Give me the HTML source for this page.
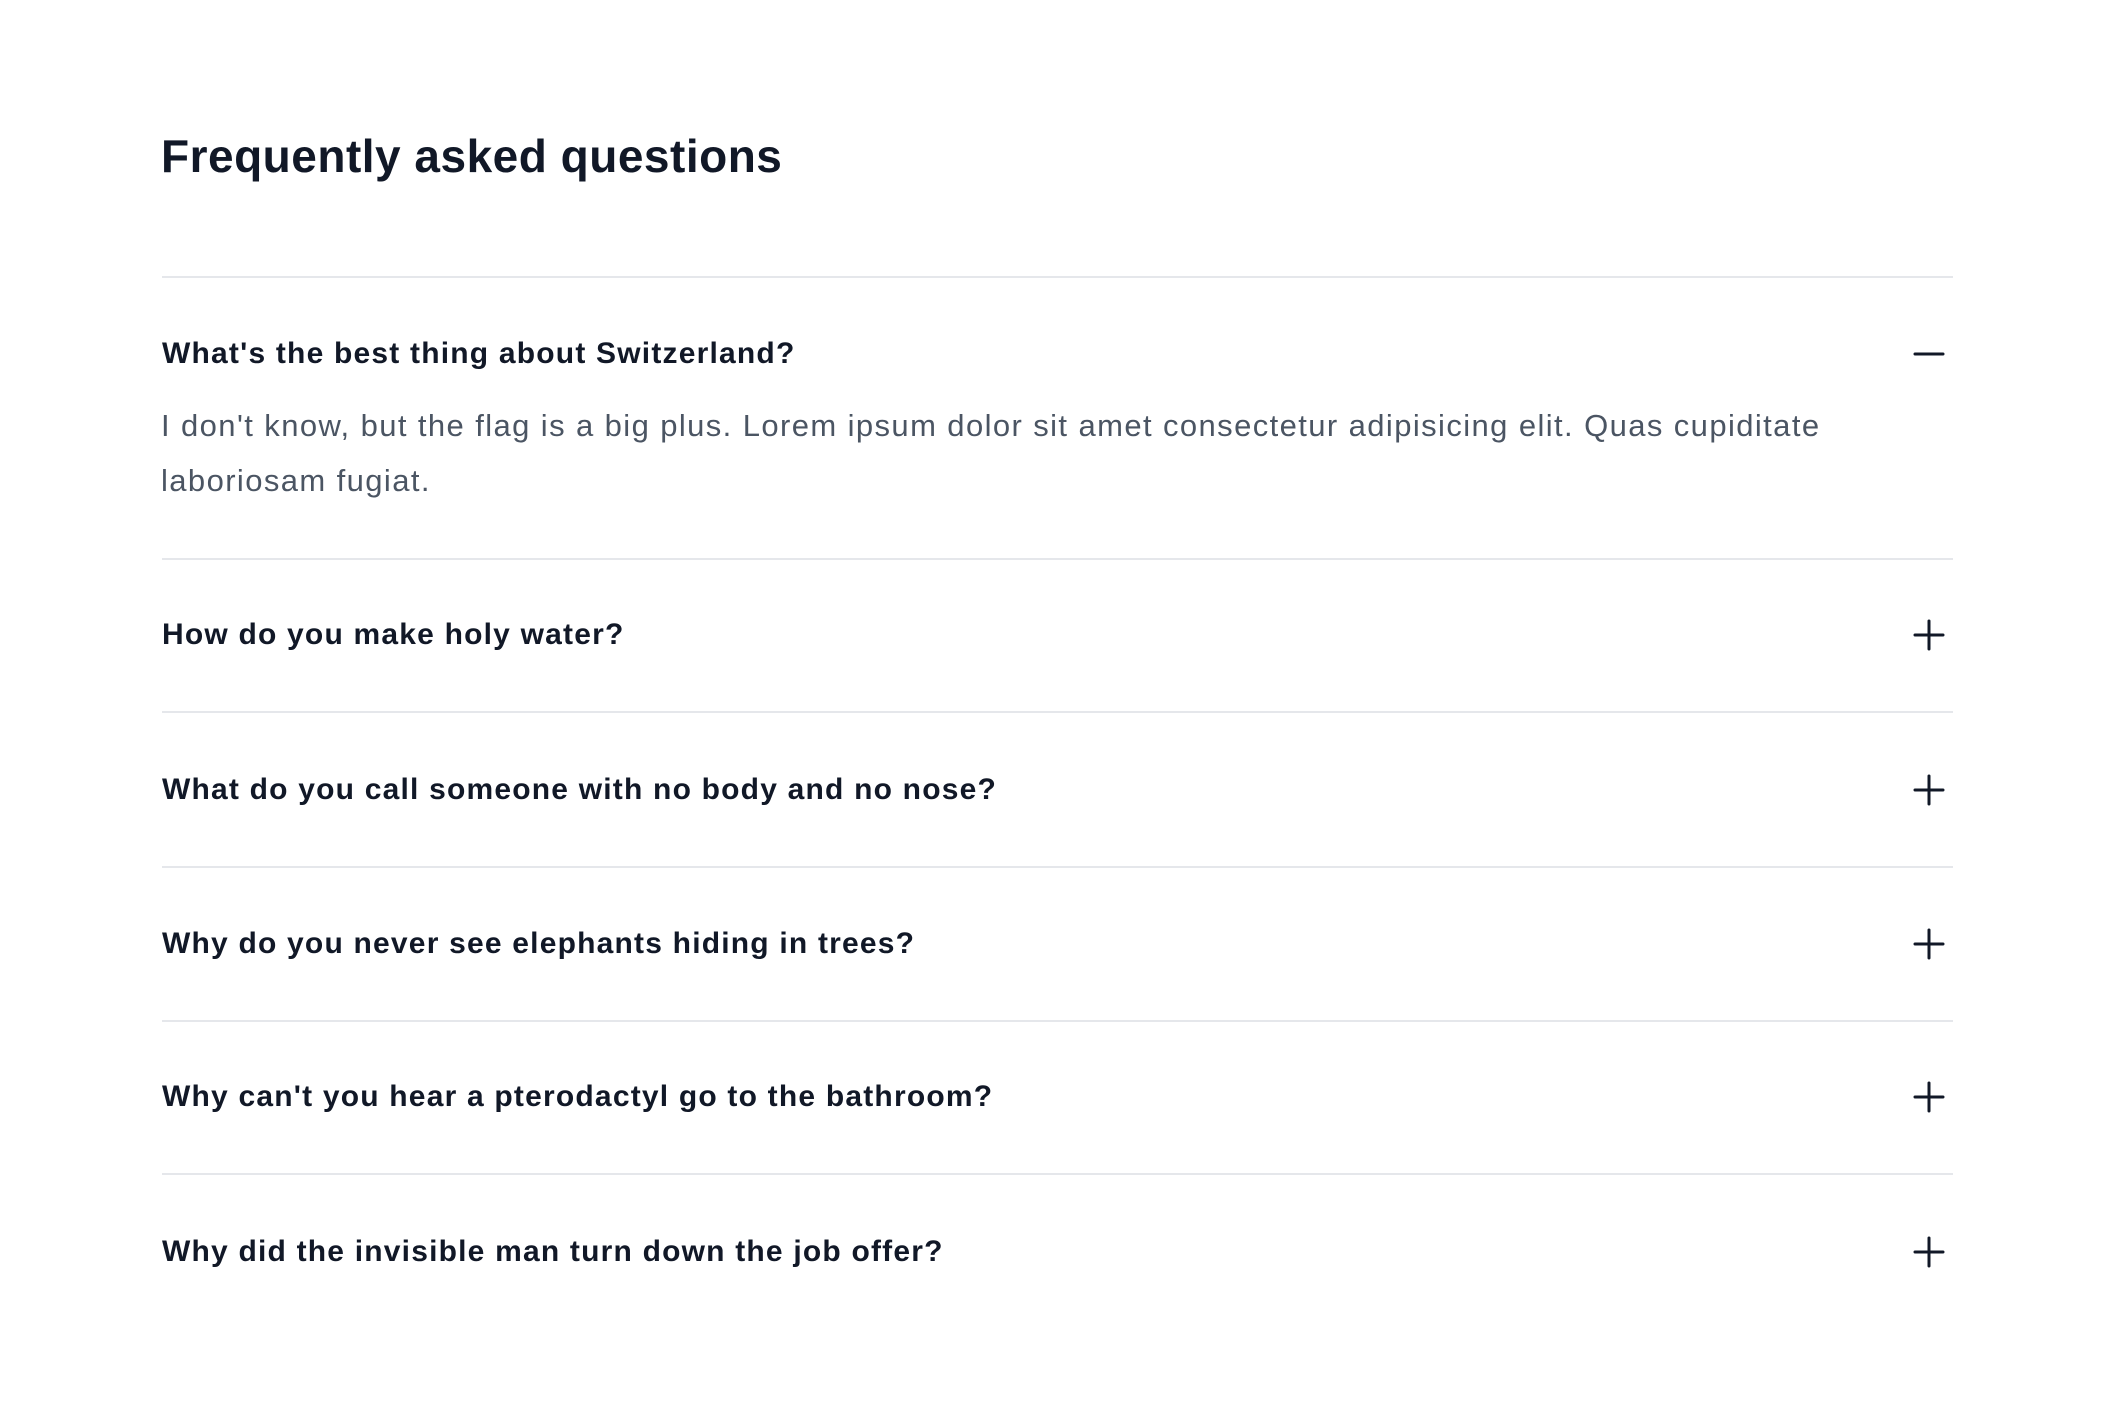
<!DOCTYPE html>
<html><head><meta charset="utf-8"><style>
html,body{margin:0;padding:0;background:#fff;}
body{width:2112px;height:1408px;position:relative;overflow:hidden;font-family:"Liberation Sans",sans-serif;color:#111827;}
h1{position:absolute;left:161px;top:126px;margin:0;font-size:46px;line-height:60px;font-weight:700;letter-spacing:0.5px;}
.hr{position:absolute;left:162px;width:1791px;height:2px;background:#e5e7eb;}
.q{position:absolute;left:162px;font-size:30px;font-weight:700;line-height:40px;letter-spacing:1.2px;}
.a{position:absolute;left:161px;top:398px;width:1740px;font-size:31px;line-height:55px;color:#4b5563;letter-spacing:1.4px;}
svg{position:absolute;left:1913px;width:32px;height:32px;}
</style></head><body>
<h1>Frequently asked questions</h1>
<div class="hr" style="top:276px"></div>
<div class="q" style="top:334px">What's the best thing about Switzerland?</div>
<svg style="top:338px" viewBox="0 0 32 32"><path d="M2 16H30" stroke="#111827" stroke-width="3" stroke-linecap="round"/></svg>
<div class="a">I don't know, but the flag is a big plus. Lorem ipsum dolor sit amet consectetur adipisicing elit. Quas cupiditate laboriosam fugiat.</div>
<div class="hr" style="top:558px"></div>
<div class="q" style="top:615px">How do you make holy water?</div>
<svg style="top:619px" viewBox="0 0 32 32"><path d="M2 16H30M16 2V30" stroke="#111827" stroke-width="3" stroke-linecap="round"/></svg>
<div class="hr" style="top:711px"></div>
<div class="q" style="top:770px">What do you call someone with no body and no nose?</div>
<svg style="top:774px" viewBox="0 0 32 32"><path d="M2 16H30M16 2V30" stroke="#111827" stroke-width="3" stroke-linecap="round"/></svg>
<div class="hr" style="top:866px"></div>
<div class="q" style="top:924px">Why do you never see elephants hiding in trees?</div>
<svg style="top:928px" viewBox="0 0 32 32"><path d="M2 16H30M16 2V30" stroke="#111827" stroke-width="3" stroke-linecap="round"/></svg>
<div class="hr" style="top:1020px"></div>
<div class="q" style="top:1077px">Why can't you hear a pterodactyl go to the bathroom?</div>
<svg style="top:1081px" viewBox="0 0 32 32"><path d="M2 16H30M16 2V30" stroke="#111827" stroke-width="3" stroke-linecap="round"/></svg>
<div class="hr" style="top:1173px"></div>
<div class="q" style="top:1232px">Why did the invisible man turn down the job offer?</div>
<svg style="top:1236px" viewBox="0 0 32 32"><path d="M2 16H30M16 2V30" stroke="#111827" stroke-width="3" stroke-linecap="round"/></svg>
</body></html>
